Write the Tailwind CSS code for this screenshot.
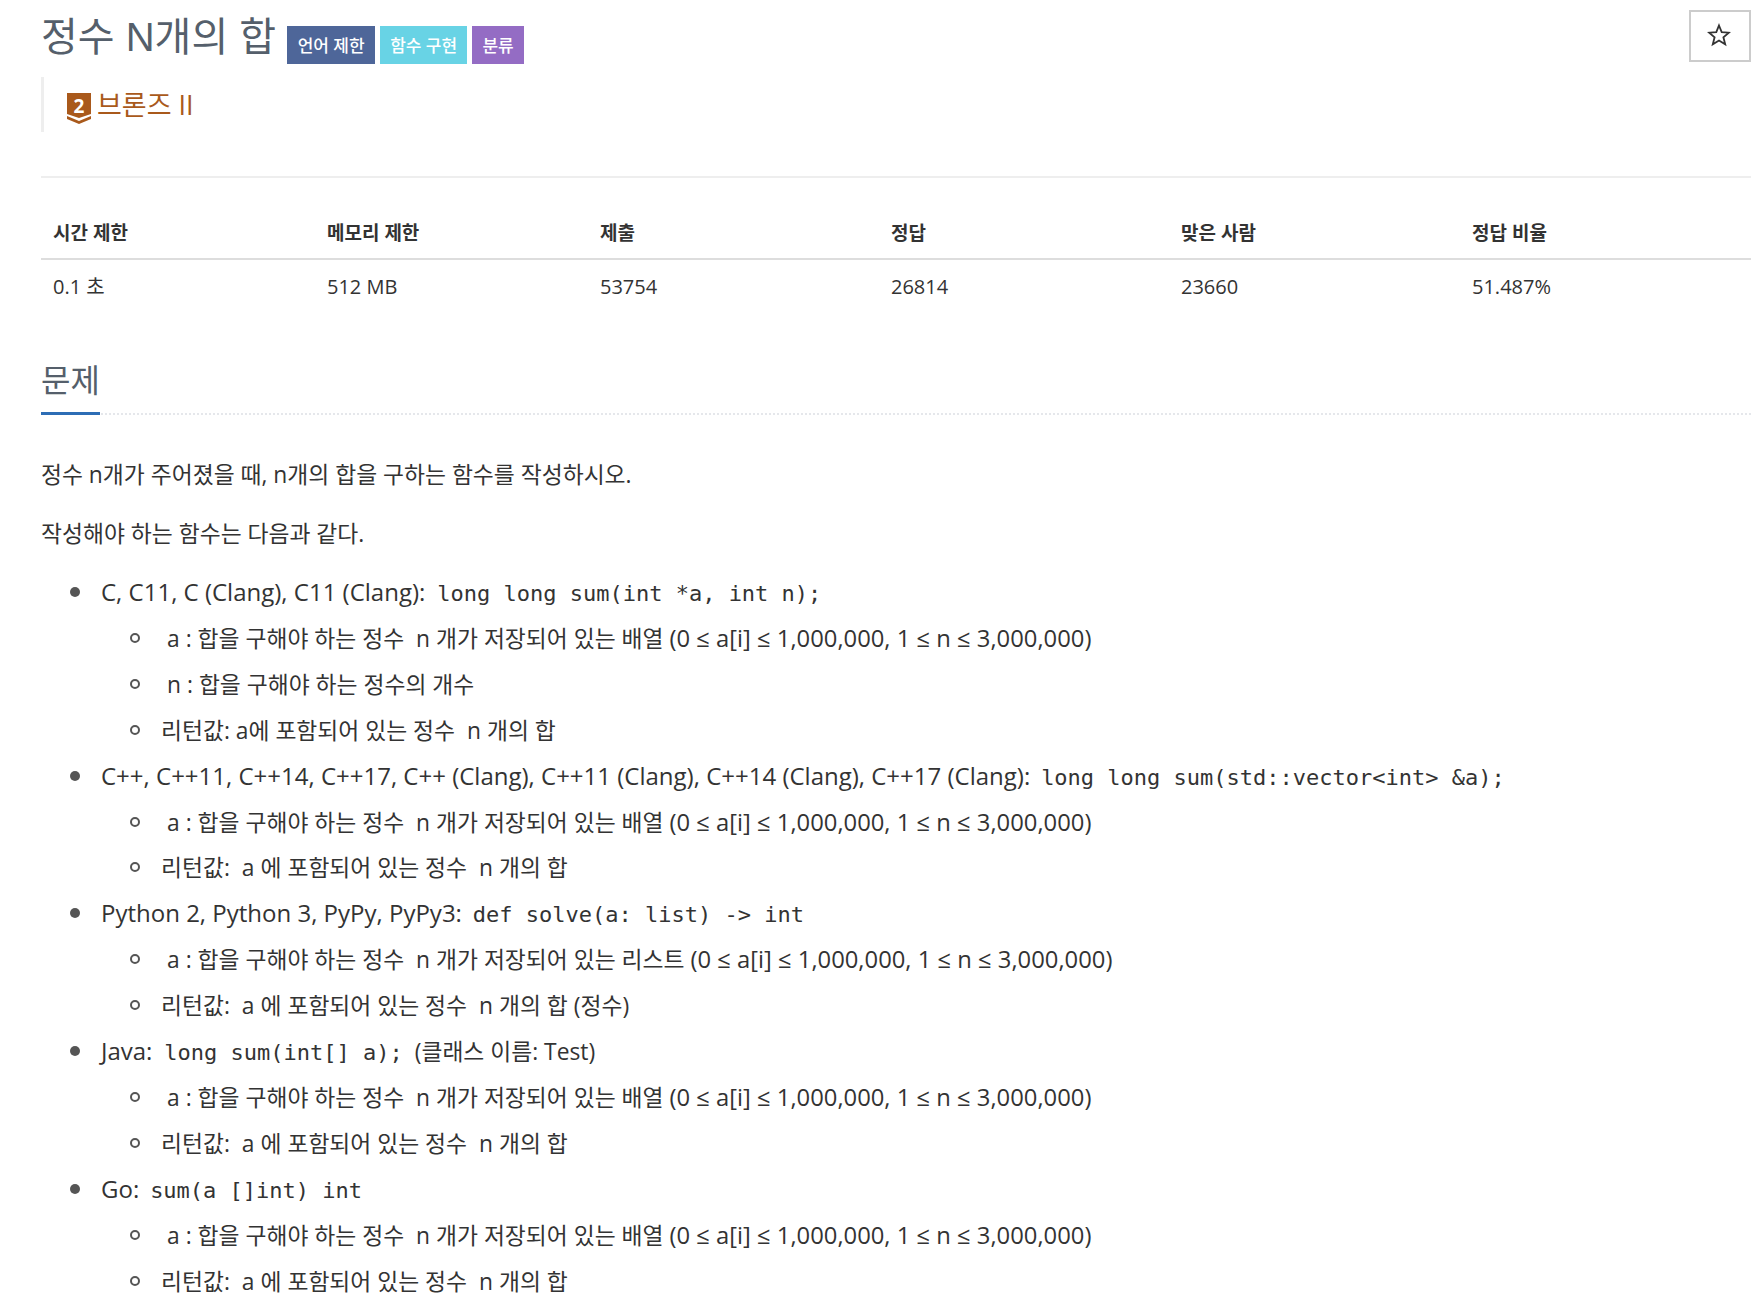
<!DOCTYPE html>
<html lang="ko">
<head>
  <meta charset="UTF-8">
  <title>정수 N개의 합</title>
  <script src="https://cdn.jsdelivr.net/npm/@tailwindcss/browser@4"></script>
</head>
<body class="bg-white text-[#333] font-['Open_Sans','Noto_Sans_CJK_KR',sans-serif] text-[22.8px] overflow-hidden">
<main class="pl-[41px] pr-[7px] h-[1316px] overflow-hidden">

  <!-- title row -->
  <div class="flex items-start justify-between h-[77px]">
    <div class="flex items-start">
      <h1 class="text-[40px] leading-[74px] text-[#555f6b] font-['Liberation_Sans','Noto_Sans_CJK_KR',sans-serif]">정수 N개의 합</h1>
      <div class="flex gap-[5px] ml-[11px] mt-[26px] text-white text-[17px] font-medium">
        <span class="w-[88px] h-[38px] pt-[1px] flex items-center justify-center bg-[#4e6699]">언어 제한</span>
        <span class="w-[87px] h-[38px] pt-[1px] flex items-center justify-center bg-[#68d3e5]">함수 구현</span>
        <span class="w-[52px] h-[38px] pt-[1px] flex items-center justify-center bg-[#946cc4]">분류</span>
      </div>
    </div>
    <button class="mt-[10px] w-[62px] h-[52px] border-2 border-[#ccc] flex items-center justify-center">
      <svg width="24" height="24" viewBox="0 0 24 24" fill="none" stroke="#333" stroke-width="1.8" class="-mt-[2px] -ml-[2px]"><path d="M12 2.5l2.7 6.7 7.2.5-5.5 4.6 1.8 7-6.2-3.8-6.2 3.8 1.8-7L2.100 9.700l7.200-.5z"/></svg>
    </button>
  </div>

  <!-- tier -->
  <div class="h-[55px] border-l-[3px] border-[#eee] pl-[23px] flex items-start pt-[13px] text-[#a9591b] text-[27px] leading-[30px] gap-[6px]">
    <svg width="24" height="38" viewBox="0 -4 24 38" class="-mt-[1px]">
      <path d="M0 0h24v21l-12 4-12-4z" fill="#a9591b"/>
      <path d="M0 23l12 5 12-5v3l-12 5-12-5z" fill="#a9591b"/>
      <text x="12" y="20" text-anchor="middle" fill="#fff" font-size="19" font-weight="700" font-family="Open Sans">2</text>
    </svg>
    <span>브론즈 II</span>
  </div>

  <div class="mt-[44px] border-t-2 border-[#eee]"></div>

  <!-- info table -->
  <table class="w-full mt-[27px] table-fixed text-left text-[20px]">
    <thead>
      <tr class="border-b-2 border-[#ddd] h-[54px] align-middle text-[19px]">
        <th class="w-[274px] pl-[12px] pt-[4px] font-bold">시간 제한</th>
        <th class="w-[273px] pl-[12px] pt-[4px] font-bold">메모리 제한</th>
        <th class="w-[291px] pl-[12px] pt-[4px] font-bold">제출</th>
        <th class="w-[290px] pl-[12px] pt-[4px] font-bold">정답</th>
        <th class="w-[291px] pl-[12px] pt-[4px] font-bold">맞은 사람</th>
        <th class="pl-[12px] pt-[4px] font-bold">정답 비율</th>
      </tr>
    </thead>
    <tbody>
      <tr class="h-[54px] align-middle">
        <td class="pl-[12px]">0.1 초</td>
        <td class="pl-[12px]">512 MB</td>
        <td class="pl-[12px]">53754</td>
        <td class="pl-[12px]">26814</td>
        <td class="pl-[12px]">23660</td>
        <td class="pl-[12px]">51.487%</td>
      </tr>
    </tbody>
  </table>

  <!-- problem -->
  <section class="mt-[42px]">
    <div class="border-b-2 border-dotted border-[#e5e7eb] h-[60px]">
      <h2 class="inline-block h-[60px] border-b-[3px] border-[#2d6db5] text-[32px] leading-[50px] text-[#555f6b]">문제</h2>
    </div>
    <p class="mt-[44px] leading-[32px]">정수 n개가 주어졌을 때, n개의 합을 구하는 함수를 작성하시오.</p>
    <p class="mt-[27px] leading-[32px]">작성해야 하는 함수는 다음과 같다.</p>

    <ul class="mt-[20px] pl-[60px] list-none leading-[45.9px]">
      <li class="relative before:absolute before:left-[-31px] before:top-[17px] before:size-[10px] before:rounded-full before:bg-[#555]"><span class="text-[24px] leading-none">C, C11, C (Clang), C11 (Clang):</span> <code class="px-[6px] leading-none font-['DejaVu_Sans_Mono',monospace] text-[22px]">long long sum(int *a, int n);</code>
        <ul class="pl-[60px]">
          <li class="relative before:absolute before:left-[-31px] before:top-[17px] before:size-[10px] before:rounded-full before:border-2 before:border-[#555]"><code class="px-[6px] leading-none font-['Open_Sans']">a</code>: 합을 구해야 하는 정수 <code class="px-[6px] leading-none font-['Open_Sans']">n</code>개가 저장되어 있는 배열 <span class="text-[23.8px] leading-none">(0 ≤ a[i] ≤ 1,000,000, 1 ≤ n ≤ 3,000,000)</span></li>
          <li class="relative before:absolute before:left-[-31px] before:top-[17px] before:size-[10px] before:rounded-full before:border-2 before:border-[#555]"><code class="px-[6px] leading-none font-['Open_Sans']">n</code>: 합을 구해야 하는 정수의 개수</li>
          <li class="relative before:absolute before:left-[-31px] before:top-[17px] before:size-[10px] before:rounded-full before:border-2 before:border-[#555]">리턴값: a에 포함되어 있는 정수 <code class="px-[6px] leading-none font-['Open_Sans']">n</code>개의 합</li>
        </ul>
      </li>
      <li class="relative before:absolute before:left-[-31px] before:top-[17px] before:size-[10px] before:rounded-full before:bg-[#555]"><span class="text-[24px] leading-none">C++, C++11, C++14, C++17, C++ (Clang), C++11 (Clang), C++14 (Clang), C++17 (Clang):</span> <code class="px-[5px] leading-none font-['DejaVu_Sans_Mono',monospace] text-[22px]">long long sum(std::vector&lt;int&gt; &amp;a);</code>
        <ul class="pl-[60px]">
          <li class="relative before:absolute before:left-[-31px] before:top-[17px] before:size-[10px] before:rounded-full before:border-2 before:border-[#555]"><code class="px-[6px] leading-none font-['Open_Sans']">a</code>: 합을 구해야 하는 정수 <code class="px-[6px] leading-none font-['Open_Sans']">n</code>개가 저장되어 있는 배열 <span class="text-[23.8px] leading-none">(0 ≤ a[i] ≤ 1,000,000, 1 ≤ n ≤ 3,000,000)</span></li>
          <li class="relative before:absolute before:left-[-31px] before:top-[17px] before:size-[10px] before:rounded-full before:border-2 before:border-[#555]">리턴값: <code class="px-[6px] leading-none font-['Open_Sans']">a</code>에 포함되어 있는 정수 <code class="px-[6px] leading-none font-['Open_Sans']">n</code>개의 합</li>
        </ul>
      </li>
      <li class="relative before:absolute before:left-[-31px] before:top-[17px] before:size-[10px] before:rounded-full before:bg-[#555]"><span class="text-[24px] leading-none">Python 2, Python 3, PyPy, PyPy3:</span> <code class="px-[5px] leading-none font-['DejaVu_Sans_Mono',monospace] text-[22px]">def solve(a: list) -&gt; int</code>
        <ul class="pl-[60px]">
          <li class="relative before:absolute before:left-[-31px] before:top-[17px] before:size-[10px] before:rounded-full before:border-2 before:border-[#555]"><code class="px-[6px] leading-none font-['Open_Sans']">a</code>: 합을 구해야 하는 정수 <code class="px-[6px] leading-none font-['Open_Sans']">n</code>개가 저장되어 있는 리스트 <span class="text-[23.8px] leading-none">(0 ≤ a[i] ≤ 1,000,000, 1 ≤ n ≤ 3,000,000)</span></li>
          <li class="relative before:absolute before:left-[-31px] before:top-[17px] before:size-[10px] before:rounded-full before:border-2 before:border-[#555]">리턴값: <code class="px-[6px] leading-none font-['Open_Sans']">a</code>에 포함되어 있는 정수 <code class="px-[6px] leading-none font-['Open_Sans']">n</code>개의 합 (정수)</li>
        </ul>
      </li>
      <li class="relative before:absolute before:left-[-31px] before:top-[17px] before:size-[10px] before:rounded-full before:bg-[#555]"><span class="text-[24px] leading-none">Java:</span> <code class="px-[6px] leading-none font-['DejaVu_Sans_Mono',monospace] text-[22px]">long sum(int[] a);</code> (클래스 이름: Test)
        <ul class="pl-[60px]">
          <li class="relative before:absolute before:left-[-31px] before:top-[17px] before:size-[10px] before:rounded-full before:border-2 before:border-[#555]"><code class="px-[6px] leading-none font-['Open_Sans']">a</code>: 합을 구해야 하는 정수 <code class="px-[6px] leading-none font-['Open_Sans']">n</code>개가 저장되어 있는 배열 <span class="text-[23.8px] leading-none">(0 ≤ a[i] ≤ 1,000,000, 1 ≤ n ≤ 3,000,000)</span></li>
          <li class="relative before:absolute before:left-[-31px] before:top-[17px] before:size-[10px] before:rounded-full before:border-2 before:border-[#555]">리턴값: <code class="px-[6px] leading-none font-['Open_Sans']">a</code>에 포함되어 있는 정수 <code class="px-[6px] leading-none font-['Open_Sans']">n</code>개의 합</li>
        </ul>
      </li>
      <li class="relative before:absolute before:left-[-31px] before:top-[17px] before:size-[10px] before:rounded-full before:bg-[#555]"><span class="text-[24px] leading-none">Go:</span> <code class="px-[5px] leading-none font-['DejaVu_Sans_Mono',monospace] text-[22px]">sum(a []int) int</code>
        <ul class="pl-[60px]">
          <li class="relative before:absolute before:left-[-31px] before:top-[17px] before:size-[10px] before:rounded-full before:border-2 before:border-[#555]"><code class="px-[6px] leading-none font-['Open_Sans']">a</code>: 합을 구해야 하는 정수 <code class="px-[6px] leading-none font-['Open_Sans']">n</code>개가 저장되어 있는 배열 <span class="text-[23.8px] leading-none">(0 ≤ a[i] ≤ 1,000,000, 1 ≤ n ≤ 3,000,000)</span></li>
          <li class="relative before:absolute before:left-[-31px] before:top-[17px] before:size-[10px] before:rounded-full before:border-2 before:border-[#555]">리턴값: <code class="px-[6px] leading-none font-['Open_Sans']">a</code>에 포함되어 있는 정수 <code class="px-[6px] leading-none font-['Open_Sans']">n</code>개의 합</li>
        </ul>
      </li>
    </ul>
  </section>
</main>
</body>
</html>
